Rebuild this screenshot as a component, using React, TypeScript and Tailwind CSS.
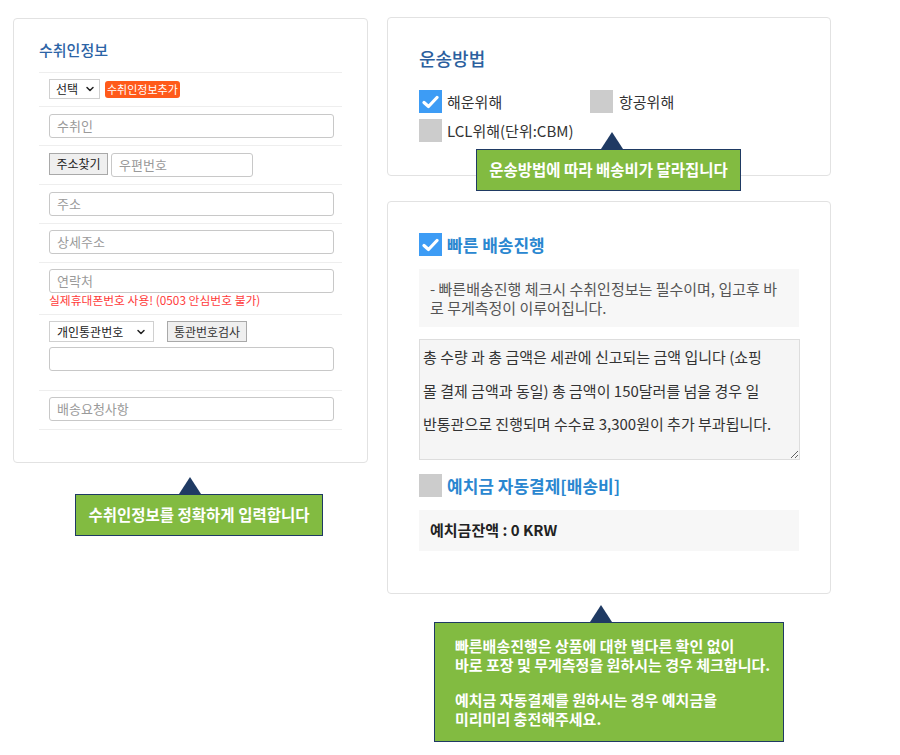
import { ChevronDown } from 'lucide-react';

const font = { fontFamily: '"Noto Sans CJK KR", "Noto Sans", sans-serif' };

const Check = ({ on }: { on?: boolean }) => (
  <span
    className={`w-[23px] h-[23px] shrink-0 flex items-center justify-center ${on ? 'bg-[#3d9cf5]' : 'bg-[#cccccc]'}`}
  >
    {on && (
      <svg width="17" height="14" viewBox="0 0 17 14">
        <path d="M2 7.5 L6.5 11.5 L15 2.5" fill="none" stroke="white" strokeWidth="3.2" strokeLinecap="round" strokeLinejoin="round" />
      </svg>
    )}
  </span>
);

const Field = ({ ph, w = 'w-[285px]' }: { ph?: string; w?: string }) => (
  <div className={`${w} h-[24px] shrink-0 border border-[#c8c8c8] rounded-[3px] bg-white px-[7px] flex items-center text-[13px] leading-[16px] text-[#9a9a9a]`}>
    {ph}
  </div>
);

const Row = ({ children, className = '' }: { children: React.ReactNode; className?: string }) => (
  <div className={`border-t border-[#eeeeee] pl-[10px] ${className}`}>{children}</div>
);

const Tip = ({ children, arrow }: { children: React.ReactNode; arrow: number }) => (
  <div className="relative">
    <div
      className="absolute top-[-17px] w-0 h-0 border-l-[11px] border-r-[11px] border-b-[17px] border-l-transparent border-r-transparent border-b-[#1f3a63]"
      style={{ left: arrow - 11 }}
    />
    <div className="bg-[#82bb41] border border-[#1f3a63] text-white font-bold">{children}</div>
  </div>
);

export default function App() {
  return (
    <div className="w-[900px] h-[755px] bg-white flex items-start gap-[19px] pl-[13px] pt-[17px]" style={font}>
      {/* left column */}
      <div className="w-[355px] flex flex-col">
        <section className="mt-[1px] border border-[#e2e2e2] rounded-[4px] px-[25px] pt-[21px] pb-[32px]">
          <h2 className="text-[15px] leading-[20px] font-medium text-[#2c64a6] mb-[12px]">수취인정보</h2>
          <Row className="h-[34px] pt-[6px] flex items-start gap-[5px]">
            <div className="w-[51px] h-[20px] border border-[#d0d0d0] bg-white flex items-center justify-between pl-[6px] pr-[3px] text-[12px] leading-[16px] text-[#222]">
              선택 <ChevronDown size={12} strokeWidth={3} />
            </div>
            <span className="mt-[2px] bg-[#ff5a1a] text-white text-[11px] leading-[17px] px-[2px] rounded-[3px]">수취인정보추가</span>
          </Row>
          <Row className="h-[39px] pt-[7px]">
            <Field ph="수취인" />
          </Row>
          <Row className="h-[39px] pt-[7px] flex items-start gap-[3px]">
            <button className="w-[59px] h-[22px] bg-[#efefef] border border-[#a9a9a9] text-[12px] leading-[16px] text-[#222]">주소찾기</button>
            <Field ph="우편번호" w="w-[142px]" />
          </Row>
          <Row className="h-[39px] pt-[7px]">
            <Field ph="주소" />
          </Row>
          <Row className="h-[39px] pt-[6px]">
            <Field ph="상세주소" />
          </Row>
          <Row className="h-[52px] pt-[6px]">
            <Field ph="연락처" />
            <p className="text-[11.8px] leading-[16px] mt-[-1px] text-[#ff3b3b]">실제휴대폰번호 사용! (0503 안심번호 불가)</p>
          </Row>
          <Row className="h-[76px] pt-[6px]">
            <div className="flex items-center gap-[13px]">
              <div className="w-[105px] h-[21px] border border-[#d0d0d0] bg-white flex items-center justify-between pl-[7px] pr-[6px] text-[12px] leading-[16px] text-[#222]">
                개인통관번호 <ChevronDown size={12} strokeWidth={3} />
              </div>
              <button className="w-[80px] h-[21px] bg-[#efefef] border border-[#a9a9a9] text-[12px] leading-[16px] text-[#333]">통관번호검사</button>
            </div>
            <div className="mt-[5px]">
              <Field />
            </div>
          </Row>
          <Row className="h-[40px] pt-[6px] border-b">
            <Field ph="배송요청사항" />
          </Row>
        </section>
        <div className="mt-[31px] ml-[62px] w-[248px]">
          <Tip arrow={115}>
            <div className="h-[40px] flex items-center justify-center text-[15.5px]">수취인정보를 정확하게 입력합니다</div>
          </Tip>
        </div>
      </div>

      {/* right column */}
      <div className="w-[444px] flex flex-col">
        <section className="relative h-[159px] border border-[#e2e2e2] rounded-[4px] px-[31px] pt-[28px]">
          <h2 className="text-[18px] leading-[24px] font-medium text-[#2c5f9e] mb-[20px]">운송방법</h2>
          <div className="flex items-center text-[15px] leading-[23px] text-[#333]">
            <div className="w-[171px] flex items-center gap-[5px]">
              <Check on /> 해운위해
            </div>
            <div className="flex items-center gap-[6px]">
              <Check /> 항공위해
            </div>
          </div>
          <div className="mt-[6px] flex items-center gap-[5px] text-[15px] leading-[23px] text-[#333]">
            <Check /> LCL위해(단위:CBM)
          </div>
          <div className="absolute left-[88px] top-[131px] w-[265px]">
            <Tip arrow={136}>
              <div className="h-[40px] flex items-center justify-center text-[15.5px]">운송방법에 따라 배송비가 달라집니다</div>
            </Tip>
          </div>
        </section>

        <section className="mt-[25px] h-[393px] border border-[#e2e2e2] rounded-[4px] px-[31px] pt-[31px]">
          <div className="flex items-center gap-[5px] h-[23px]">
            <Check on />
            <span className="text-[17px] leading-[23px] font-bold text-[#2a87d0]">빠른 배송진행</span>
          </div>
          <div className="mt-[13px] h-[58px] bg-[#f7f7f7] px-[11px] pt-[10px] text-[15px] leading-[19px] text-[#555] whitespace-nowrap">
            - 빠른배송진행 체크시 수취인정보는 필수이며, 입고후 바
            <br />로 무게측정이 이루어집니다.
          </div>
          <textarea
            readOnly
            className="mt-[13px] block w-[381px] h-[121px] bg-[#f5f5f5] border border-[#dddddd] px-[3px] py-0 text-[15px] leading-[33.5px] text-[#333] outline-none"
            style={{ ...font, paddingTop: 0, marginTop: 12 }}
            defaultValue={
              '총 수량 과 총 금액은 세관에 신고되는 금액 입니다 (쇼핑\n몰 결제 금액과 동일) 총 금액이 150달러를 넘을 경우 일\n반통관으로 진행되며 수수료 3,300원이 추가 부과됩니다.'
            }
          />
          <div className="mt-[14px] flex items-center gap-[5px] h-[23px]">
            <Check />
            <span className="text-[17px] leading-[23px] font-bold text-[#2a87d0]">예치금 자동결제[배송비]</span>
          </div>
          <div className="mt-[13px] h-[41px] bg-[#f7f7f7] px-[11px] flex items-center text-[15px] font-semibold text-[#222]">
            예치금잔액 : 0 KRW
          </div>
        </section>
        <div className="mt-[28px] ml-[47px] w-[350px]">
          <Tip arrow={167}>
            <div className="h-[118px] pl-[20px] pt-[13px] text-[15px] leading-[19px] whitespace-nowrap">
              <p>
                빠른배송진행은 상품에 대한 별다른 확인 없이
                <br />
                바로 포장 및 무게측정을 원하시는 경우 체크합니다.
              </p>
              <p className="mt-[16px]">
                예치금 자동결제를 원하시는 경우 예치금을
                <br />
                미리미리 충전해주세요.
              </p>
            </div>
          </Tip>
        </div>
      </div>
    </div>
  );
}
